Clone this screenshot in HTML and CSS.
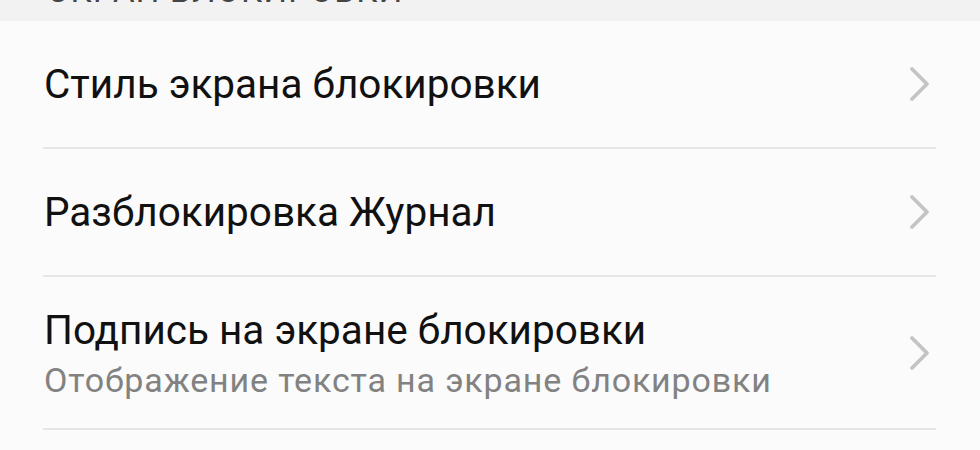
FILE: index.html
```html
<!DOCTYPE html>
<html lang="ru">
<head>
    <meta charset="UTF-8">
    <meta name="viewport" content="width=device-width, initial-scale=1.0">
    <title>Экран блокировки</title>
    <link rel="stylesheet" href="styles.css">
</head>
<body>
    <div class="seccion">
        <span class="seccion_titulo">ЭКРАН БЛОКИРОВКИ</span>
    </div>

    <div class="lista">
        <!-- Estilo -->
        <div class="fila">
            <div class="fila_texto">
                <p class="fila_titulo">Стиль экрана блокировки</p>
            </div>
            <svg class="flecha" viewBox="0 0 22 36" width="22" height="36"><polyline points="3,3 18,18 3,33"/></svg>
        </div>

        <!-- Journal -->
        <div class="fila">
            <div class="fila_texto">
                <p class="fila_titulo">Разблокировка Журнал</p>
            </div>
            <svg class="flecha" viewBox="0 0 22 36" width="22" height="36"><polyline points="3,3 18,18 3,33"/></svg>
        </div>

        <!-- Firma -->
        <div class="fila fila_doble">
            <div class="fila_texto">
                <p class="fila_titulo">Подпись на экране блокировки</p>
                <p class="fila_sub">Отображение текста на экране блокировки</p>
            </div>
            <svg class="flecha" viewBox="0 0 22 36" width="22" height="36"><polyline points="3,3 18,18 3,33"/></svg>
        </div>
    </div>
</body>
</html>
```

FILE: styles.css
```css
html, body {
    margin: 0;
    padding: 0;
    width: 100%;
    height: 100%;
    background-color: #fbfbfb;
    font-family: Roboto, "Noto Sans", sans-serif;
    overflow: hidden;
}

.seccion {
    height: 21px;
    background-color: #f2f2f2;
    overflow: hidden;
    padding-left: 47px;
}

.seccion_titulo {
    display: block;
    font-size: 33px;
    line-height: 33px;
    margin-top: -26px;
    color: #444;
    letter-spacing: 1.3px;
}

.lista {
    padding: 0 44px 0 43px;
}

.fila {
    display: flex;
    align-items: center;
    justify-content: space-between;
    height: 126px;
    border-bottom: 2px solid #e6e6e6;
}

.fila_doble {
    height: 151px;
}

.fila_texto {
    padding-left: 1px;
}

.fila_titulo {
    margin: 0;
    font-size: 40.5px;
    line-height: 48px;
    color: #111;
}

.fila_sub {
    margin: 6px 0 0 0;
    font-size: 34px;
    line-height: 40px;
    letter-spacing: 0.85px;
    color: #828282;
}

.flecha {
    flex: none;
    margin-right: 5px;
    fill: none;
    stroke: #c4c4c4;
    stroke-width: 3.8;
    stroke-linecap: round;
    stroke-linejoin: round;
}
```
